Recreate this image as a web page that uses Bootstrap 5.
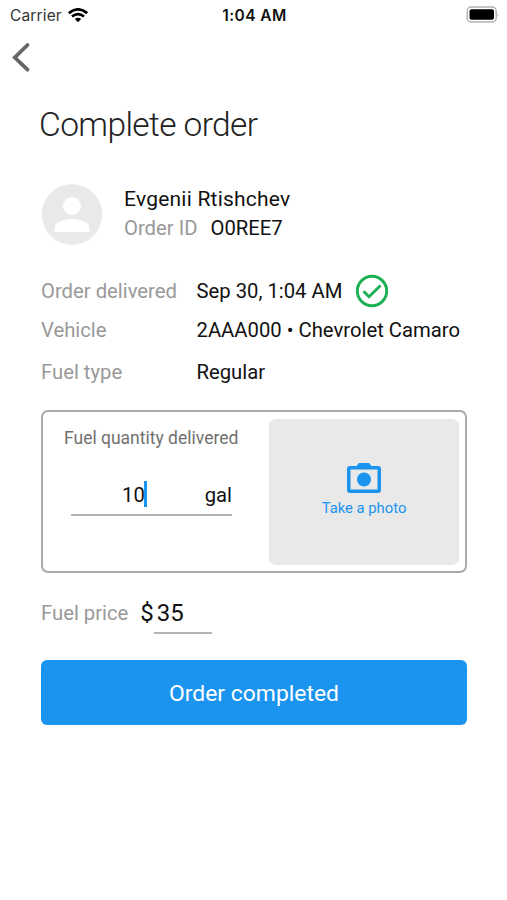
<!DOCTYPE html>
<html lang="en">
<head>
<meta charset="utf-8">
<meta name="viewport" content="width=device-width, initial-scale=1">
<title>Complete order</title>
<link href="https://cdn.jsdelivr.net/npm/bootstrap@5.3.0/dist/css/bootstrap.min.css" rel="stylesheet">
<style>
body { font-family: Roboto, "Liberation Sans", sans-serif; font-size: 20.25px; line-height: 30px; color: #111; background: #fff; min-height: 900px; white-space: nowrap; }
.status-bar { height: 30px; padding: 0 8px 0 10px; font-family: Inter, "Liberation Sans", sans-serif; font-size: 15.5px; }
.status-side { flex: 1 1 0; }
.carrier { letter-spacing: .15px; color: #333; padding-top: 1px; }
.wifi { margin-left: 6px; }
.status-time { font-weight: 600; font-size: 15.5px; letter-spacing: .45px; padding-top: 1px; }
.back-btn { margin: 12px 0 0 12px; width: 20px; height: 32px; }
.page { padding: 0 40px 0 41px; }
.page-title { font-size: 33.5px; font-weight: 300; line-height: 40px; letter-spacing: -.6px; margin: 31px 0 0 -2px; color: #222; }
.profile { margin-top: 39px; gap: 21px; }
.person { line-height: 29px; margin-top: -1px; }
.name { font-size: 21px; letter-spacing: .22px; }
.order-code { padding-left: 13px; }
.label { color: #999; }
.details { margin-top: 26px; }
.detail { height: 40px; }
.detail + .detail { height: 38px; }
.detail:last-child { height: 46px; }
.detail .label { width: 155.5px; }
.check { margin-left: 12.5px; }
.quantity-box { margin-top: 15px; height: 163px; border: 2px solid #aaa; border-radius: 7px; padding: 7px 6px 6px 21px; }
.quantity-title { font-size: 17.5px; line-height: 24px; color: #707070; margin-top: 7px; }
.quantity-input { width: 161px; height: 36px; margin: 30px 0 0 7px; border-bottom: 2px solid #b4b4b4; line-height: 30px; }
.quantity-value { margin-left: 51px; }
.caret { width: 3px; height: 26px; margin: 1px 0 0 -1px; background: #1a94ef; }
.photo-btn { width: 190px; height: 146px; background: #e9e9e9; border-radius: 7px; color: #1a94ef; font-size: 14.8px; line-height: 20px; }
.photo-icon { margin: -4px 0 4px; }
.price { margin-top: 24px; height: 37px; }
.price-label { line-height: 33px; }
.price-value { font-size: 24px; line-height: 32px; }
.price-input { width: 58px; height: 37px; border-bottom: 2px solid #b4b4b4; padding-left: 3px; }
.submit-btn { margin-top: 26px; height: 65px; background: #1a94ef; border-radius: 6px; color: #fff; font-size: 22.9px; padding: 3px 0 0; }
.submit-btn:hover { background: #1a94ef; color: #fff; }
</style>
</head>
<body>
<header>
  <div class="status-bar d-flex align-items-center">
    <div class="status-side d-flex align-items-center">
      <span class="carrier">Carrier</span>
      <svg class="wifi" width="20" height="15" viewBox="0 0 20 15" fill="none" stroke="#000" stroke-width="2.8"><path d="M.8 5.200Q10-2.400 19.200 5.200M4 8.500Q10 3.700 16 8.500"/><path d="M6.800 10.900Q10 8.400 13.200 10.900L10 14.200Z" fill="#000" stroke="none"/></svg>
    </div>
    <div class="status-time">1:04 AM</div>
    <div class="status-side d-flex justify-content-end">
      <svg class="battery" width="33" height="18" viewBox="0 0 33 18"><rect x="1.200" y="1" width="29" height="15" rx="4" fill="#fff" stroke="#b4b4b4" stroke-width="1.500"/><rect x="3.500" y="3.200" width="24.500" height="10.600" rx="2"/><path d="M31.500 6.500q1.500 2 0 4z" fill="#aaa"/></svg>
    </div>
  </div>
  <button class="back-btn btn p-0 border-0 d-block" aria-label="Back"><svg class="d-block" width="20" height="32" viewBox="0 0 20 32" fill="none" stroke="#666" stroke-width="3.800" stroke-linecap="round"><path d="M15.500 3L2.800 15.500l12.700 12.200"/></svg></button>
</header>
<main class="page">
  <h1 class="page-title">Complete order</h1>
  <section class="profile d-flex align-items-center">
    <svg width="62" height="61" viewBox="0 0 62 61"><circle cx="31" cy="30.500" r="30.300" fill="#e9e9e9"/><circle cx="31" cy="22" r="9" fill="#fff"/><path d="M13.500 48v-4.500c0-5.500 10-8.500 17.500-8.500s17.500 3 17.500 8.500V48z" fill="#fff"/></svg>
    <div class="person"><div class="name">Evgenii Rtishchev</div><div class="d-flex"><span class="label">Order ID</span><span class="order-code">O0REE7</span></div></div>
  </section>
  <section class="details">
    <div class="detail d-flex align-items-center"><span class="label">Order delivered</span><span>Sep 30, 1:04 AM</span>
      <svg class="check" width="34" height="34" viewBox="0 0 34 34" fill="none" stroke="#1bb055" stroke-width="2.900"><circle cx="17" cy="17" r="14.700"/><path d="M8.500 17.300l5.500 5.500L25.500 11.500"/></svg></div>
    <div class="detail d-flex align-items-center"><span class="label">Vehicle</span><span>2AAA000 • Chevrolet Camaro</span></div>
    <div class="detail d-flex align-items-center"><span class="label">Fuel type</span><span>Regular</span></div>
  </section>
  <section class="quantity-box d-flex justify-content-between">
    <div>
      <div class="quantity-title">Fuel quantity delivered</div>
      <div class="quantity-input d-flex justify-content-between"><div class="quantity-value d-flex"><span>10</span><span class="caret"></span></div><span>gal</span></div>
    </div>
    <button class="photo-btn btn p-0 border-0 d-flex flex-column align-items-center justify-content-center">
      <svg class="photo-icon" width="34" height="32" viewBox="0 0 34 32"><path fill="#1a94ef" fill-rule="evenodd" d="M3 4h6.500L12 1h10l2.500 3H31q3 0 3 3v21q0 3-3 3H3q-3 0-3-3V7q0-3 3-3zm.500 3.500v20h27v-20z"/><circle cx="17" cy="17.500" r="7" fill="#1a94ef"/></svg>
      <span>Take a photo</span>
    </button>
  </section>
  <section class="price d-flex"><span class="label price-label">Fuel price</span><span class="price-value ms-2 ps-1">$</span><span class="price-value price-input">35</span></section>
  <button class="submit-btn btn w-100 border-0 d-block">Order completed</button>
</main>
<script src="https://cdn.jsdelivr.net/npm/bootstrap@5.3.0/dist/js/bootstrap.bundle.min.js"></script>
</body>
</html>
